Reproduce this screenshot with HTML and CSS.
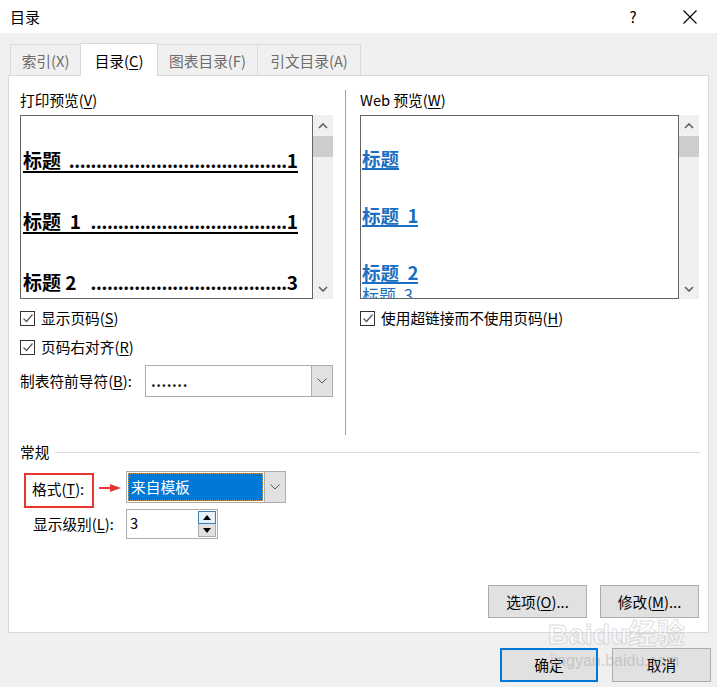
FILE: index.html
```html
<!DOCTYPE html>
<html lang="zh-CN">
<head>
<meta charset="utf-8">
<title>目录</title>
<link rel="stylesheet" href="styles.css">
</head>
<body>
<div class="titlebar">
  <div class="title">目录</div>
  <div class="help">?</div>
  <svg class="close" width="14" height="14" viewBox="0 0 14 14"><path d="M0.5 0.5 L13.5 13.5 M13.5 0.5 L0.5 13.5" stroke="#000" stroke-width="1.1" fill="none"/></svg>
</div>

<div class="tabs">
  <div class="tab t1">索引(X)</div>
  <div class="tab t2 active">目录(<u>C</u>)</div>
  <div class="tab t3">图表目录(F)</div>
  <div class="tab t4">引文目录(A)</div>
</div>

<div class="panel">
  <div class="top">
    <div class="col-left">
      <div class="label">打印预览(<u>V</u>)</div>
      <div class="preview-wrap">
        <div class="pbox">
          <div class="prow"><span class="pt">标题 </span><span class="dots">........................................</span><span class="pn">1</span></div>
          <div class="prow"><span class="pt">标题  1</span><span class="dots">....................................</span><span class="pn">1</span></div>
          <div class="prow nb"><span class="pt">标题 2 </span><span class="dots">....................................</span><span class="pn">3</span></div>
        </div>
        <div class="sb">
          <div class="sb-arrow"><svg width="10" height="6" viewBox="0 0 10 6"><polyline points="1,5 5,1 9,5" fill="none" stroke="#606060" stroke-width="1.6"/></svg></div>
          <div class="sb-thumb"></div>
          <div class="sb-space"></div>
          <div class="sb-arrow"><svg width="10" height="6" viewBox="0 0 10 6"><polyline points="1,1 5,5 9,1" fill="none" stroke="#606060" stroke-width="1.6"/></svg></div>
        </div>
      </div>
      <div class="chk first">
        <span class="cbox"><svg width="12" height="12" viewBox="0 0 12 12"><polyline points="1.5,6.5 4.5,9.5 10.5,2.5" fill="none" stroke="#555" stroke-width="1.2"/></svg></span>
        <span>显示页码(<u>S</u>)</span>
      </div>
      <div class="chk">
        <span class="cbox"><svg width="12" height="12" viewBox="0 0 12 12"><polyline points="1.5,6.5 4.5,9.5 10.5,2.5" fill="none" stroke="#555" stroke-width="1.2"/></svg></span>
        <span>页码右对齐(<u>R</u>)</span>
      </div>
      <div class="leader-row">
        <div class="leader-label">制表符前导符(<u>B</u>):</div>
        <div class="combo leader-combo">
          <div class="combo-val">.......</div>
          <div class="combo-btn"><svg width="10" height="6" viewBox="0 0 10 6"><polyline points="0.5,0.5 5,5 9.5,0.5" fill="none" stroke="#555" stroke-width="1"/></svg></div>
        </div>
      </div>
    </div>
    <div class="vsep"></div>
    <div class="col-right">
      <div class="label">Web 预览(<u>W</u>)</div>
      <div class="preview-wrap">
        <div class="wbox">
          <div class="wrow"><span class="wl">标题</span></div>
          <div class="wrow"><span class="wl">标题  1</span></div>
          <div class="wrow"><span class="wl">标题  2</span></div>
          <div class="wrow w3"><span class="wl">标题  3</span></div>
        </div>
        <div class="sb">
          <div class="sb-arrow"><svg width="10" height="6" viewBox="0 0 10 6"><polyline points="1,5 5,1 9,5" fill="none" stroke="#606060" stroke-width="1.6"/></svg></div>
          <div class="sb-thumb"></div>
          <div class="sb-space"></div>
          <div class="sb-arrow"><svg width="10" height="6" viewBox="0 0 10 6"><polyline points="1,1 5,5 9,1" fill="none" stroke="#606060" stroke-width="1.6"/></svg></div>
        </div>
      </div>
      <div class="chk first">
        <span class="cbox"><svg width="12" height="12" viewBox="0 0 12 12"><polyline points="1.5,6.5 4.5,9.5 10.5,2.5" fill="none" stroke="#555" stroke-width="1.2"/></svg></span>
        <span>使用超链接而不使用页码(<u>H</u>)</span>
      </div>
    </div>
  </div>

  <div class="gen-head">
    <span>常规</span>
    <span class="gen-line"></span>
  </div>

  <div class="format-row">
    <div class="redbox">格式(<u>T</u>):</div>
    <svg class="arrow" width="22" height="10" viewBox="0 0 22 10"><line x1="0" y1="5" x2="13" y2="5" stroke="#e8352e" stroke-width="2"/><polygon points="11,1 22,5 11,9" fill="#e8352e"/></svg>
    <div class="combo format-combo">
      <div class="combo-sel">来自模板</div>
      <div class="combo-btn"><svg width="10" height="6" viewBox="0 0 10 6"><polyline points="0.5,0.5 5,5 9.5,0.5" fill="none" stroke="#555" stroke-width="1"/></svg></div>
    </div>
  </div>

  <div class="level-row">
    <div class="level-label">显示级别(<u>L</u>):</div>
    <div class="spin">
      <div class="spin-val">3</div>
      <div class="spin-btns">
        <div class="spin-up"><svg width="8" height="5" viewBox="0 0 8 5"><polygon points="0,5 4,0 8,5" fill="#000"/></svg></div>
        <div class="spin-down"><svg width="8" height="5" viewBox="0 0 8 5"><polygon points="0,0 4,5 8,0" fill="#000"/></svg></div>
      </div>
    </div>
  </div>

  <div class="panel-btns">
    <div class="btn">选项(<u>O</u>)...</div>
    <div class="btn">修改(<u>M</u>)...</div>
  </div>
</div>

<div class="bottom-btns">
  <div class="btn ok">确定</div>
  <div class="btn cancel">取消</div>
</div>

<div class="watermark">
  <div class="wm-big">Baidu经验</div>
  <div class="wm-small">jingyan.baidu.com</div>
</div>
</body>
</html>
```

FILE: styles.css
```css
* { box-sizing: border-box; }
html, body { margin: 0; padding: 0; }
body {
  width: 717px;
  height: 687px;
  background: #f0f0f0;
  font-family: "Noto Sans CJK SC", "Microsoft YaHei", sans-serif;
  font-size: 14.7px;
  color: #000;
  position: relative;
  overflow: hidden;
}
u { text-decoration: underline; text-underline-offset: 2px; }

/* title bar */
.titlebar {
  height: 33px;
  background: #fff;
  display: flex;
  align-items: center;
  padding-left: 10px;
}
.title { flex: 1; font-size: 15px; line-height: 20px; }
.help { width: 14px; text-align: center; font-size: 15px; line-height: 20px; margin-right: 43px; }
.close { margin-right: 20px; }

/* tabs */
.tabs {
  display: flex;
  align-items: flex-end;
  height: 33px;
  margin-top: 10px;
  padding-left: 10px;
  position: relative;
  z-index: 2;
}
.tab {
  height: 31px;
  margin-bottom: 1px;
  border: 1px solid #d9d9d9;
  border-bottom: none;
  background: #f0f0f0;
  color: #6d6d6d;
  display: flex;
  align-items: center;
  justify-content: center;
  padding-top: 2px;
  line-height: 20px;
  margin-right: -1px;
}
.tab.active {
  height: 33px;
  margin-bottom: 0;
  background: #fff;
  color: #000;
  position: relative;
  z-index: 3;
}
.t1 { width: 71px; }
.t2 { width: 78px; }
.t3 { width: 101px; }
.t4 { width: 104px; }

/* panel */
.panel {
  position: relative;
  z-index: 1;
  margin-left: 8px;
  margin-top: -1px;
  width: 701px;
  height: 558px;
  background: #fff;
  border: 1px solid #d9d9d9;
  display: flex;
  flex-direction: column;
}
.top { display: flex; margin-top: 14px; }
.col-left { margin-left: 11px; width: 313px; }
.vsep { margin-left: 12px; width: 1px; height: 345px; background: #a0a0a0; }
.col-right { margin-left: 14px; width: 340px; }
.label { line-height: 20px; height: 20px; margin-bottom: 5px; }

.preview-wrap { display: flex; height: 184px; }
.pbox {
  width: 293px;
  height: 184px;
  border: 1px solid #646464;
  background: #fff;
  overflow: hidden;
  padding: 33px 14px 0 2px;
}
.prow {
  display: flex;
  height: 24px;
  line-height: 22px;
  font-size: 19px;
  font-weight: bold;
  white-space: nowrap;
  border-bottom: 2px solid #000;
  margin-bottom: 37px;
}
.prow.nb { border-bottom-color: transparent; }
.pt { white-space: pre; }
.dots { flex: 1; font-size: 18px; min-width: 0; text-align: right; letter-spacing: -0.4px; }

.wbox {
  width: 319px;
  height: 184px;
  border: 1px solid #646464;
  background: #fff;
  overflow: hidden;
  padding: 32px 0 0 1px;
}
.wrow {
  height: 20px;
  line-height: 20px;
  margin-bottom: 37px;
  font-size: 18.5px;
  font-weight: bold;
  color: #1b6ec2;
  white-space: pre;
}
.wl { display: inline-block; line-height: 19px; border-bottom: 2px solid #1b6ec2; }
.wrow.w3 { margin-top: -33px; height: 18px; line-height: 18px; font-weight: normal; font-size: 17px; }
.wrow.w3 .wl { line-height: 18px; border-bottom-width: 1px; }

.sb {
  width: 20px;
  height: 184px;
  background: #f0f0f0;
  display: flex;
  flex-direction: column;
}
.sb-arrow { height: 21px; display: flex; align-items: center; justify-content: center; }
.sb-thumb { height: 21px; background: #cdcdcd; }
.sb-space { flex: 1; }

/* checkbox rows */
.chk { display: flex; align-items: center; height: 20px; line-height: 20px; margin-top: 9px; }
.cbox {
  width: 15px;
  height: 15px;
  border: 1px solid #333;
  margin-right: 6px;
  display: flex;
  align-items: center;
  justify-content: center;
  background: #fff;
}

.leader-row { display: flex; align-items: center; margin-top: 8px; height: 32px; }
.leader-label { width: 125px; line-height: 20px; }
.combo { display: flex; border: 1px solid #adadad; background: #fff; }
.leader-combo { width: 188px; height: 32px; }
.combo-val { flex: 1; line-height: 30px; padding-left: 5px; font-weight: bold; color: #2a1a10; letter-spacing: 0.5px; }
.combo-btn {
  width: 21px;
  background: #e1e1e1;
  border-left: 1px solid #adadad;
  display: flex;
  align-items: center;
  justify-content: center;
}

/* general section */
.gen-head { display: flex; align-items: center; margin-top: 7px; margin-left: 11px; height: 20px; line-height: 20px; }
.gen-line { flex: 1; height: 1px; background: #dcdcdc; margin-left: 6px; margin-right: 8px; }

.format-row { display: flex; align-items: flex-start; margin-top: 9px; margin-left: 15px; }
.redbox {
  width: 70px;
  height: 35px;
  margin-top: 2px;
  border: 2px solid #e8352e;
  padding: 4px 0 0 6px;
  line-height: 20px;
}
.arrow { margin-left: 5px; margin-top: 12px; }
.format-combo { width: 160px; height: 32px; margin-left: 5px; padding: 1px 0 1px 1px; }
.combo-sel {
  flex: 1;
  background: #0078d7;
  color: #fff;
  line-height: 26px;
  padding-left: 2px;
  border: 1px dotted #d89a50;
  margin-right: 1px;
}
.format-combo .combo-btn { margin: -1px 0; }

.level-row { display: flex; align-items: center; margin-top: 1px; margin-left: 24px; height: 30px; }
.level-label { width: 93px; line-height: 20px; }
.spin { width: 92px; height: 30px; border: 1px solid #adadad; display: flex; background: #fff; }
.spin-val { flex: 1; padding-left: 3px; line-height: 26px; }
.spin-btns { width: 18px; margin: 1px 1px 1px 0; display: flex; flex-direction: column; }
.spin-up, .spin-down { height: 13px; display: flex; align-items: center; justify-content: center; }
.spin-up { background: #e5f1fb; border: 1px solid #3c7fb1; }
.spin-down { background: #e1e1e1; border: 1px solid #adadad; border-top: none; }

/* buttons */
.btn {
  height: 33px;
  background: #e1e1e1;
  border: 1px solid #adadad;
  display: flex;
  align-items: center;
  justify-content: center;
  line-height: 20px;
}
.panel-btns {
  margin-top: auto;
  margin-bottom: 14px;
  display: flex;
  justify-content: flex-end;
  gap: 13px;
  padding-right: 9px;
}
.panel-btns .btn { width: 99px; }
.bottom-btns {
  margin-top: 15px;
  display: flex;
  justify-content: flex-end;
  gap: 14px;
  padding-right: 6px;
}
.bottom-btns .btn { height: 34px; }
.btn.ok { width: 98px; border: 2px solid #0078d7; }
.btn.cancel { width: 99px; }

/* watermark overlay */
.watermark {
  position: absolute;
  left: 548px;
  top: 618px;
  z-index: 5;
  pointer-events: none;
}
.wm-big {
  font-family: "Liberation Sans", "Noto Sans CJK SC", sans-serif;
  font-size: 28px;
  font-weight: bold;
  line-height: 34px;
  color: rgba(255, 255, 255, 0.5);
  -webkit-text-stroke: 1px rgba(170, 170, 170, 0.4);
  letter-spacing: 0.5px;
}
.wm-small {
  font-family: "Liberation Sans", sans-serif;
  font-size: 16px;
  line-height: 18px;
  margin-left: 2px;
  color: rgba(150, 150, 150, 0.4);
}
```
